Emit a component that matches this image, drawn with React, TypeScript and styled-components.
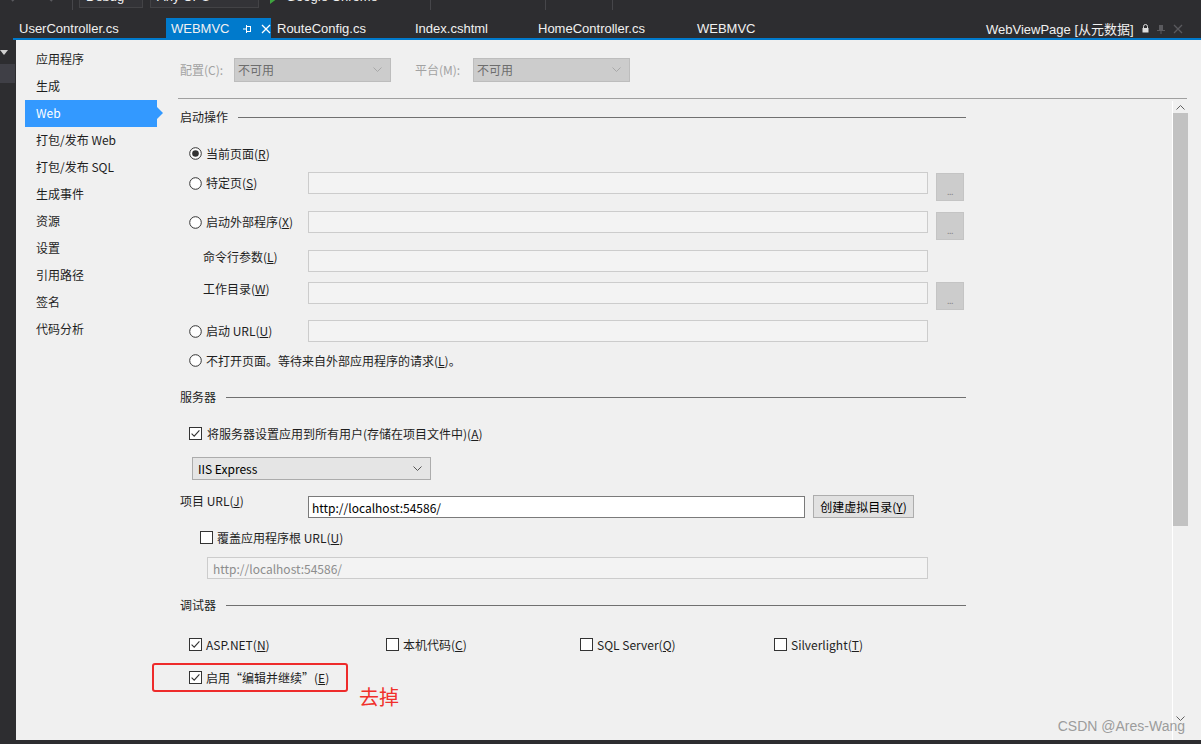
import React from "react"
import styled, { createGlobalStyle } from "styled-components"

const CJK = `"Noto Sans CJK SC", "Microsoft YaHei", sans-serif`
const UI = `"Liberation Sans", Arial, "Noto Sans CJK SC", sans-serif`

const GlobalStyle = createGlobalStyle`
  html, body {
    margin: 0;
    padding: 0;
  }
  body {
    width: 1201px;
    height: 744px;
    overflow: hidden;
    background: #2d2d30;
    font-family: ${CJK};
  }
  * {
    box-sizing: border-box;
  }
`

const Window = styled.div`
  position: relative;
  width: 1201px;
  height: 744px;
  display: flex;
  flex-direction: column;
  background: #2d2d30;
`

/* ---------- toolbar (only the lower edge shows) ---------- */

const ToolBar = styled.div`
  height: 10px;
  display: flex;
  align-items: flex-end;
  overflow: hidden;
  padding-left: 8px;
`

const ToolIcon = styled.div<{ $w: number; $ml?: number }>`
  width: ${(p) => p.$w}px;
  height: 20px;
  margin-left: ${(p) => p.$ml ?? 0}px;
  margin-bottom: 2px;
  flex-shrink: 0;
  display: flex;
  align-items: flex-end;
  justify-content: center;
`

const ToolSep = styled.div<{ $ml: number }>`
  width: 1px;
  height: 10px;
  margin-left: ${(p) => p.$ml}px;
  background: #46464a;
  flex-shrink: 0;
`

const Combo = styled.div<{ $w: number; $ml: number }>`
  width: ${(p) => p.$w}px;
  height: 21px;
  margin-left: ${(p) => p.$ml}px;
  margin-bottom: 2px;
  flex-shrink: 0;
  background: #333337;
  border: 1px solid #434346;
  color: #f1f1f1;
  font: 13px ${UI};
  line-height: 17px;
  padding-left: 6px;
`

const ToolText = styled.div<{ $ml: number }>`
  margin-left: ${(p) => p.$ml}px;
  margin-bottom: 6px;
  color: #f1f1f1;
  font: 13px ${UI};
  line-height: 14px;
  flex-shrink: 0;
`

/* ---------- document tabs ---------- */

const TabStrip = styled.div`
  height: 28px;
  display: flex;
  align-items: flex-end;
  padding-left: 13px;
`

const Tab = styled.div<{ $w: number; $active?: boolean }>`
  width: ${(p) => p.$w}px;
  height: 20px;
  flex-shrink: 0;
  display: flex;
  align-items: center;
  padding-left: ${(p) => (p.$active ? 5 : 6)}px;
  padding-top: 1px;
  background: ${(p) => (p.$active ? "#007acc" : "transparent")};
  color: #f1f1f1;
  font: 13px ${UI};
  white-space: nowrap;
`

const TabIcons = styled.div`
  display: flex;
  align-items: center;
  margin-left: 12px;
  gap: 9px;
`

const RightTabs = styled.div`
  margin-left: auto;
  width: 215px;
  height: 20px;
  display: flex;
  align-items: center;
  padding-top: 1px;
  color: #f1f1f1;
  font: 13px ${UI};
  white-space: nowrap;
`

const RightIcons = styled.div`
  display: flex;
  align-items: center;
  margin-left: 8px;
  gap: 7px;
`

const BlueRule = styled.div`
  height: 2px;
  margin-left: 13px;
  background: #007acc;
`

/* ---------- body ---------- */

const Body = styled.div`
  flex: 1;
  display: flex;
  min-height: 0;
`

const LeftDock = styled.div`
  width: 16px;
  flex-shrink: 0;
  display: flex;
  flex-direction: column;
  align-items: flex-start;
  padding-top: 10px;
`

const DockButton = styled.div`
  width: 15px;
  height: 19px;
  margin-top: 9px;
  background: #3f3f46;
`

const Panel = styled.div`
  flex: 1;
  display: flex;
  background: #f0f0f0;
  min-width: 0;
`

const Nav = styled.ul`
  width: 150px;
  flex-shrink: 0;
  margin: 0;
  padding: 6px 0 0 9px;
  list-style: none;
`

const NavItem = styled.li<{ $active?: boolean }>`
  position: relative;
  width: 132px;
  height: 27px;
  padding-left: 11px;
  font-size: 12px;
  line-height: 26px;
  color: ${(p) => (p.$active ? "#ffffff" : "#1e1e1e")};
  background: ${(p) => (p.$active ? "#3399ff" : "transparent")};

  &::after {
    content: "";
    display: ${(p) => (p.$active ? "block" : "none")};
    position: absolute;
    right: -6px;
    top: 7px;
    border-style: solid;
    border-width: 6px 0 6px 6px;
    border-color: transparent transparent transparent #3399ff;
  }
`

const Main = styled.div`
  flex: 1;
  display: flex;
  flex-direction: column;
  min-width: 0;
`

const ConfigBar = styled.div`
  height: 58px;
  padding: 18px 0 0 14px;
  display: flex;
  align-items: flex-start;
`

const ConfigLabel = styled.span<{ $w: number }>`
  width: ${(p) => p.$w}px;
  height: 24px;
  line-height: 23px;
  font-size: 12px;
  color: #a2a2a2;
  flex-shrink: 0;
`

const DisabledSelect = styled.div<{ $mr?: number }>`
  width: 157px;
  height: 24px;
  margin-right: ${(p) => p.$mr ?? 0}px;
  display: flex;
  align-items: center;
  justify-content: space-between;
  padding: 0 8px 1px 3px;
  background: #cccccc;
  border: 1px solid #bdbdbd;
  color: #6d6d6d;
  font-size: 12px;
`

const Divider = styled.div`
  height: 1px;
  margin: 0 14px 0 12px;
  background: #a0a0a0;
  flex-shrink: 0;
`

const ScrollBody = styled.div`
  flex: 1;
  display: flex;
  min-height: 0;
`

const Content = styled.div`
  flex: 1;
  padding: 9px 0 0 14px;
  display: flex;
  flex-direction: column;
  color: #1e1e1e;
  font-size: 12px;
`

const SectionHeader = styled.div<{ $mt?: number }>`
  width: 786px;
  height: 18px;
  margin-top: ${(p) => p.$mt ?? 0}px;
  display: flex;
  align-items: center;
  gap: 10px;
  line-height: 18px;

  &::after {
    content: "";
    flex: 1;
    height: 1px;
    background: #707070;
  }
`

const FieldRow = styled.div<{ $mt: number; $h?: number }>`
  margin-top: ${(p) => p.$mt}px;
  height: ${(p) => p.$h ?? 22}px;
  display: grid;
  grid-template-columns: 120px 620px 28px;
  column-gap: 8px;
  align-items: start;
`

const OptionLabel = styled.label<{ $pl?: number }>`
  height: 22px;
  display: flex;
  align-items: center;
  gap: 4px;
  padding-left: ${(p) => p.$pl ?? 9}px;
  white-space: nowrap;
  line-height: 22px;
`

const PlainLabel = styled.span<{ $pl?: number }>`
  padding-left: ${(p) => p.$pl ?? 23}px;
  line-height: 14px;
  white-space: nowrap;
`

const LineRow = styled.div<{ $mt: number; $pl?: number }>`
  position: relative;
  margin-top: ${(p) => p.$mt}px;
  height: 22px;
  display: flex;
  align-items: center;
  padding-left: ${(p) => p.$pl ?? 9}px;
  gap: 5px;
  white-space: nowrap;
`

const TextBox = styled.div<{ $w?: number; $tone?: "plain" | "edit" | "disabled" }>`
  width: ${(p) => (p.$w ? `${p.$w}px` : "auto")};
  height: 22px;
  display: flex;
  align-items: center;
  padding-left: ${(p) => (p.$tone === "disabled" ? 5 : 3)}px;
  background: ${(p) => (p.$tone === "edit" ? "#ffffff" : "#f3f3f3")};
  border: 1px solid ${(p) => (p.$tone === "edit" ? "#7a7a7a" : "#cccccc")};
  color: ${(p) => (p.$tone === "disabled" ? "#8d8d8d" : "#000000")};
  font-size: 12px;
  flex-shrink: 0;
`

const BrowseButton = styled.div<{ $mt?: number }>`
  width: 28px;
  height: 28px;
  margin-top: ${(p) => p.$mt ?? 1}px;
  display: flex;
  align-items: center;
  justify-content: center;
  padding-top: 8px;
  background: #cccccc;
  border: 1px solid #c4c4c4;
  color: #8a8a8a;
  font-size: 9px;
  letter-spacing: -0.5px;
`

const ServerSelect = styled.div`
  width: 239px;
  height: 23px;
  margin: 13px 0 0 12px;
  display: flex;
  align-items: center;
  justify-content: space-between;
  padding: 0 8px 0 5px;
  background: #e5e5e5;
  border: 1px solid #acacac;
  color: #000;
  font-size: 12px;
`

const UrlRow = styled.div`
  margin-top: 16px;
  height: 22px;
  display: flex;
  align-items: flex-start;
`

const UrlLabel = styled.span`
  width: 128px;
  line-height: 10px;
  white-space: nowrap;
`

const PushButton = styled.div`
  width: 101px;
  height: 23px;
  margin: -1px 0 0 8px;
  display: flex;
  align-items: center;
  justify-content: center;
  background: #e1e1e1;
  border: 1px solid #adadad;
  color: #000;
  font-size: 12px;
  white-space: nowrap;
`

const Indented = styled.div<{ $mt: number; $ml: number }>`
  margin: ${(p) => p.$mt}px 0 0 ${(p) => p.$ml}px;
`

const DebugGrid = styled.div`
  margin-top: 19px;
  height: 22px;
  padding-left: 9px;
  display: grid;
  grid-template-columns: 197px 194px 194px auto;
  align-items: center;
`

const DebugOption = styled.label`
  display: flex;
  align-items: center;
  gap: 4px;
  white-space: nowrap;
`

const Key = styled.u`
  text-underline-offset: 1px;
`

const Highlight = styled.div`
  position: absolute;
  left: -28px;
  top: -3px;
  width: 196px;
  height: 29px;
  border: 2px solid #ee2b2b;
  border-radius: 3px;
  pointer-events: none;
`

const Note = styled.span`
  position: absolute;
  left: 179px;
  top: 19px;
  color: #f0302b;
  font-size: 20px;
  line-height: 24px;
`

const ScrollBar = styled.div`
  width: 16px;
  margin: 2px 13px 0 0;
  flex-shrink: 0;
  display: flex;
  flex-direction: column;
  border-left: 1px solid #ffffff;
`

const ScrollArrow = styled.div<{ $mb?: number }>`
  height: 12px;
  margin-bottom: ${(p) => p.$mb ?? 0}px;
  display: flex;
  align-items: center;
  justify-content: center;
`

const Thumb = styled.div`
  height: 413px;
  background: #c2c2c2;
`

const ScrollSpacer = styled.div`
  flex: 1;
`

const StatusEdge = styled.div`
  height: 4px;
  background: #2d2d30;
`

const Watermark = styled.div`
  position: absolute;
  right: 16px;
  bottom: 10px;
  color: #9c9c9c;
  font: 14px ${UI};
  line-height: 16px;
`

/* ---------- small drawings ---------- */

const Chevron = ({ color = "#9a9a9a", up = false }: { color?: string; up?: boolean }) => (
  <svg width="9" height="5" viewBox="0 0 9 5">
    <polyline
      points={up ? "0.5,4.5 4.5,0.5 8.5,4.5" : "0.5,0.5 4.5,4.5 8.5,0.5"}
      fill="none"
      stroke={color}
      strokeWidth="1"
    />
  </svg>
)

const CheckMark = ({ checked }: { checked?: boolean }) => (
  <svg width="13" height="13" viewBox="0 0 13 13" style={{ flexShrink: 0 }}>
    <rect x="0.5" y="0.5" width="12" height="12" fill="#ffffff" stroke="#333333" />
    {checked && (
      <polyline points="2.6,6.6 5.2,9.2 10.4,3.4" fill="none" stroke="#333333" strokeWidth="1.1" />
    )}
  </svg>
)

const RadioMark = ({ checked }: { checked?: boolean }) => (
  <svg width="13" height="13" viewBox="0 0 13 13" style={{ flexShrink: 0 }}>
    <circle cx="6.5" cy="6.5" r="5.8" fill="#ffffff" stroke="#333333" />
    {checked && <circle cx="6.5" cy="6.5" r="3.3" fill="#333333" />}
  </svg>
)

const Radio = ({ checked, children }: { checked?: boolean; children: React.ReactNode }) => (
  <OptionLabel>
    <RadioMark checked={checked} />
    <span>{children}</span>
  </OptionLabel>
)

const navItems = [
  "应用程序",
  "生成",
  "Web",
  "打包/发布 Web",
  "打包/发布 SQL",
  "生成事件",
  "资源",
  "设置",
  "引用路径",
  "签名",
  "代码分析",
]

const tabs = [
  { name: "UserController.cs", w: 153 },
  { name: "WEBMVC", w: 105, active: true },
  { name: "RouteConfig.cs", w: 138 },
  { name: "Index.cshtml", w: 123 },
  { name: "HomeController.cs", w: 159 },
  { name: "WEBMVC", w: 120 },
]

export default function App() {
  return (
    <>
      <GlobalStyle />
      <Window>
        <ToolBar>
          <ToolIcon $w={14}>
            <svg width="10" height="20" viewBox="0 0 10 20">
              <polyline points="9,6 2,13" fill="none" stroke="#5a5a5e" strokeWidth="2" />
            </svg>
          </ToolIcon>
          <ToolIcon $w={14} $ml={20}>
            <svg width="10" height="20" viewBox="0 0 10 20">
              <polyline points="1,6 8,13" fill="none" stroke="#5a5a5e" strokeWidth="2" />
            </svg>
          </ToolIcon>
          <ToolSep $ml={16} />
          <Combo $w={64} $ml={6}>Debug</Combo>
          <Combo $w={109} $ml={7}>Any CPU</Combo>
          <ToolIcon $w={8} $ml={11}>
            <svg width="8" height="20" viewBox="0 0 8 20">
              <polygon points="0,4 8,10 0,16" fill="#3fa33f" />
            </svg>
          </ToolIcon>
          <ToolText $ml={8}>Google Chrome</ToolText>
          <ToolIcon $w={12} $ml={16}>
            <svg width="12" height="20" viewBox="0 0 12 20">
              <circle cx="6" cy="6" r="4.5" fill="none" stroke="#3d8fe0" strokeWidth="2" />
            </svg>
          </ToolIcon>
          <ToolSep $ml={24} />
          <ToolIcon $w={14} $ml={8}>
            <svg width="14" height="20" viewBox="0 0 14 20">
              <circle cx="5" cy="6" r="3" fill="none" stroke="#3d8fe0" strokeWidth="1.5" />
              <line x1="3" y1="8" x2="1" y2="11" stroke="#3d8fe0" strokeWidth="1.5" />
              <rect x="8" y="5" width="5" height="2" fill="#d9a344" />
            </svg>
          </ToolIcon>
          <ToolIcon $w={8} $ml={4}>
            <svg width="8" height="20" viewBox="0 0 8 20">
              <rect x="0" y="4" width="7" height="1" fill="#8a8a8a" />
              <polygon points="0,6 7,6 3.5,9" fill="#8a8a8a" />
            </svg>
          </ToolIcon>
          <ToolIcon $w={10} $ml={8}>
            <svg width="10" height="20" viewBox="0 0 10 20">
              <rect x="1" y="2" width="8" height="6" fill="none" stroke="#4c4c50" />
            </svg>
          </ToolIcon>
          <ToolIcon $w={12} $ml={12}>
            <svg width="12" height="20" viewBox="0 0 12 20">
              <rect x="0" y="2" width="11" height="6" fill="none" stroke="#4c4c50" />
            </svg>
          </ToolIcon>
          <ToolIcon $w={12} $ml={12}>
            <svg width="12" height="20" viewBox="0 0 12 20">
              <line x1="5" y1="1" x2="5" y2="8" stroke="#4c4c50" />
              <line x1="7" y1="5" x2="12" y2="5" stroke="#4c4c50" />
              <line x1="7" y1="7" x2="12" y2="7" stroke="#4c4c50" />
            </svg>
          </ToolIcon>
          <ToolSep $ml={14} />
          <ToolIcon $w={10} $ml={12}>
            <svg width="10" height="20" viewBox="0 0 10 20">
              <line x1="0" y1="5" x2="10" y2="5" stroke="#4c4c50" />
            </svg>
          </ToolIcon>
          <ToolIcon $w={10} $ml={22}>
            <svg width="10" height="20" viewBox="0 0 10 20">
              <line x1="2" y1="3" x2="10" y2="3" stroke="#4c4c50" />
              <line x1="0" y1="6" x2="10" y2="6" stroke="#4c4c50" />
            </svg>
          </ToolIcon>
          <ToolSep $ml={12} />
          {[0, 1, 2, 3].map((i) => (
            <ToolIcon key={i} $w={10} $ml={i === 0 ? 10 : 12}>
              <svg width="10" height="20" viewBox="0 0 10 20">
                <polygon points="1,0 9,0 9,6 5,4 1,6" fill="#4a4a4e" />
              </svg>
            </ToolIcon>
          ))}
          <ToolIcon $w={8} $ml={10}>
            <svg width="8" height="20" viewBox="0 0 8 20">
              <rect x="0" y="2" width="7" height="1" fill="#8a8a8a" />
              <polygon points="0,4 7,4 3.5,7" fill="#8a8a8a" />
            </svg>
          </ToolIcon>
        </ToolBar>

        <TabStrip>
          {tabs.map((t, i) => (
            <Tab key={i} $w={t.w} $active={t.active}>
              {t.name}
              {t.active && (
                <TabIcons>
                  <svg width="10" height="10" viewBox="0 0 10 10">
                    <line x1="1" y1="5" x2="4" y2="5" stroke="#fff" />
                    <rect x="4.5" y="2.5" width="4" height="5" fill="none" stroke="#fff" />
                    <line x1="4.5" y1="1" x2="4.5" y2="9" stroke="#fff" />
                  </svg>
                  <svg width="10" height="10" viewBox="0 0 10 10">
                    <path d="M1 1 L9 9 M9 1 L1 9" stroke="#fff" strokeWidth="1.3" />
                  </svg>
                </TabIcons>
              )}
            </Tab>
          ))}
          <RightTabs>
            WebViewPage [从元数据]
            <RightIcons>
              <svg width="7" height="9" viewBox="0 0 7 9">
                <path d="M1.5 4 V2.5 a2 2 0 0 1 4 0 V4" fill="none" stroke="#ddd" />
                <rect x="0.5" y="4" width="6" height="4.5" fill="#ddd" />
              </svg>
              <svg width="10" height="10" viewBox="0 0 10 10">
                <rect x="3" y="1" width="4" height="5" fill="#5a5a5e" />
                <line x1="1" y1="6.5" x2="9" y2="6.5" stroke="#5a5a5e" />
                <line x1="5" y1="7" x2="5" y2="10" stroke="#5a5a5e" />
              </svg>
              <svg width="10" height="10" viewBox="0 0 10 10">
                <path d="M1 1 L9 9 M9 1 L1 9" stroke="#5a5a5e" strokeWidth="1.3" />
              </svg>
              <span style={{ width: 10 }} />
              <svg width="8" height="5" viewBox="0 0 8 5">
                <polygon points="0,0 8,0 4,5" fill="#e8e8e8" />
              </svg>
            </RightIcons>
          </RightTabs>
        </TabStrip>
        <BlueRule />

        <Body>
          <LeftDock>
            <svg width="8" height="5" viewBox="0 0 8 5">
              <polygon points="0,0 8,0 4,5" fill="#d0d0d0" />
            </svg>
            <DockButton />
          </LeftDock>

          <Panel>
            <Nav>
              {navItems.map((n) => (
                <NavItem key={n} $active={n === "Web"}>
                  {n}
                </NavItem>
              ))}
            </Nav>

            <Main>
              <ConfigBar>
                <ConfigLabel $w={54}>配置(C):</ConfigLabel>
                <DisabledSelect $mr={24}>
                  不可用
                  <Chevron color="#a8a8a8" />
                </DisabledSelect>
                <ConfigLabel $w={58}>平台(M):</ConfigLabel>
                <DisabledSelect>
                  不可用
                  <Chevron color="#a8a8a8" />
                </DisabledSelect>
              </ConfigBar>
              <Divider />

              <ScrollBody>
                <Content>
                  <SectionHeader>启动操作</SectionHeader>

                  <LineRow $mt={16} style={{ gap: 4 }}>
                    <RadioMark checked />
                    <span>
                      当前页面(<Key>R</Key>)
                    </span>
                  </LineRow>

                  <FieldRow $mt={8} $h={29}>
                    <Radio>
                      特定页(<Key>S</Key>)
                    </Radio>
                    <TextBox />
                    <BrowseButton>...</BrowseButton>
                  </FieldRow>

                  <FieldRow $mt={10} $h={29}>
                    <Radio>
                      启动外部程序(<Key>X</Key>)
                    </Radio>
                    <TextBox />
                    <BrowseButton>...</BrowseButton>
                  </FieldRow>

                  <FieldRow $mt={10}>
                    <PlainLabel>
                      命令行参数(<Key>L</Key>)
                    </PlainLabel>
                    <TextBox />
                  </FieldRow>

                  <FieldRow $mt={10} $h={28}>
                    <PlainLabel>
                      工作目录(<Key>W</Key>)
                    </PlainLabel>
                    <TextBox />
                    <BrowseButton $mt={0}>...</BrowseButton>
                  </FieldRow>

                  <FieldRow $mt={10}>
                    <Radio>
                      启动 URL(<Key>U</Key>)
                    </Radio>
                    <TextBox />
                  </FieldRow>

                  <LineRow $mt={7} style={{ gap: 4 }}>
                    <RadioMark />
                    <span>
                      不打开页面。等待来自外部应用程序的请求(<Key>L</Key>)。
                    </span>
                  </LineRow>

                  <SectionHeader $mt={17}>服务器</SectionHeader>

                  <LineRow $mt={16}>
                    <CheckMark checked />
                    <span>
                      将服务器设置应用到所有用户(存储在项目文件中)(<Key>A</Key>)
                    </span>
                  </LineRow>

                  <ServerSelect>
                    IIS Express
                    <Chevron color="#555555" />
                  </ServerSelect>

                  <UrlRow>
                    <UrlLabel>
                      项目 URL(<Key>J</Key>)
                    </UrlLabel>
                    <TextBox $w={497} $tone="edit">
                      http://localhost:54586/
                    </TextBox>
                    <PushButton>
                      创建虚拟目录(<Key>Y</Key>)
                    </PushButton>
                  </UrlRow>

                  <LineRow $mt={8} $pl={20} style={{ gap: 4 }}>
                    <CheckMark />
                    <span>
                      覆盖应用程序根 URL(<Key>U</Key>)
                    </span>
                  </LineRow>

                  <Indented $mt={9} $ml={27}>
                    <TextBox $w={721} $tone="disabled">
                      http://localhost:54586/
                    </TextBox>
                  </Indented>

                  <SectionHeader $mt={17}>调试器</SectionHeader>

                  <DebugGrid>
                    <DebugOption>
                      <CheckMark checked />
                      <span>
                        ASP.NET(<Key>N</Key>)
                      </span>
                    </DebugOption>
                    <DebugOption>
                      <CheckMark />
                      <span>
                        本机代码(<Key>C</Key>)
                      </span>
                    </DebugOption>
                    <DebugOption>
                      <CheckMark />
                      <span>
                        SQL Server(<Key>Q</Key>)
                      </span>
                    </DebugOption>
                    <DebugOption>
                      <CheckMark />
                      <span>
                        Silverlight(<Key>T</Key>)
                      </span>
                    </DebugOption>
                  </DebugGrid>

                  <LineRow $mt={11} style={{ gap: 4 }}>
                    <CheckMark checked />
                    <span>
                      启用“编辑并继续”(<Key>E</Key>)
                    </span>
                    <Highlight />
                    <Note>去掉</Note>
                  </LineRow>
                </Content>

                <ScrollBar>
                  <ScrollArrow>
                    <Chevron color="#606060" up />
                  </ScrollArrow>
                  <Thumb />
                  <ScrollSpacer />
                  <ScrollArrow $mb={16}>
                    <Chevron color="#606060" />
                  </ScrollArrow>
                </ScrollBar>
              </ScrollBody>
            </Main>
          </Panel>
        </Body>
        <StatusEdge />
        <Watermark>CSDN @Ares-Wang</Watermark>
      </Window>
    </>
  )
}
